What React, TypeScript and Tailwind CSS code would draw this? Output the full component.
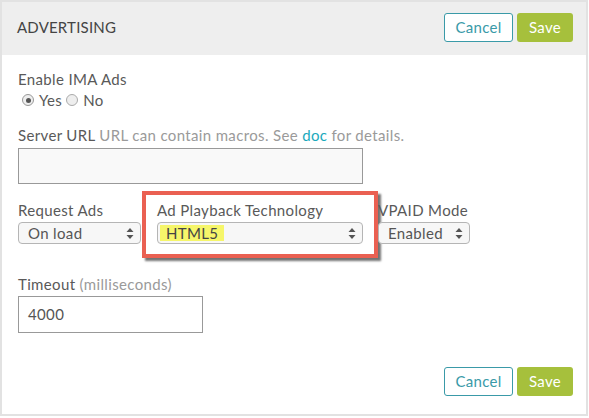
import React from "react";

const Arrows = () => (
  <svg width="8" height="13" viewBox="0 0 8 13" className="shrink-0">
    <path d="M4 1 L7.5 5 L0.5 5 Z" fill="#555" />
    <path d="M4 12 L7.5 8 L0.5 8 Z" fill="#555" />
  </svg>
);

const Select = ({ value, w, highlight }: { value: string; w: string; highlight?: boolean }) => (
  <div
    className={`${w} h-[22px] rounded-[4px] border border-[#b5b5b5] bg-[#f7f7f7] flex items-center justify-between ${
      highlight ? "pl-[2px]" : "pl-[9px]"
    } pr-[6px] text-[15px] text-[#555]`}
  >
    {highlight ? (
      <span className="bg-[#f6f66a] pl-[6px] pr-[6px] leading-[16px] text-[#444]">{value}</span>
    ) : (
      <span className="leading-[16px]">{value}</span>
    )}
    <Arrows />
  </div>
);

const Buttons = () => (
  <div className="flex gap-[4px]">
    <button className="w-[69px] h-[29px] rounded-[3px] border border-[#3a9aa8] bg-white text-[#3a9aa8] text-[15px] tracking-[0.3px]">
      Cancel
    </button>
    <button className="w-[56px] h-[29px] rounded-[3px] bg-[#a6c03c] text-white text-[15px] tracking-[0.3px]">
      Save
    </button>
  </div>
);

export default function App() {
  return (
    <div className="w-[589px] h-[418px] bg-white" style={{ fontFamily: "Lato, 'Open Sans', sans-serif" }}>
      <div className="w-[588px] h-[416px] border-2 border-[#e2e2e2] flex flex-col">
        <div className="h-[53px] bg-[#eeeeee] flex items-start justify-between pl-[15px] pr-[13px] pt-[11px]">
          <span className="text-[15px] text-[#444] tracking-[0.2px] leading-[29px]">ADVERTISING</span>
          <Buttons />
        </div>
        <div className="flex flex-col pl-[16px] pt-[15px] text-[15px] text-[#595959] tracking-[0.35px]">
          <div className="leading-[18px]">Enable IMA Ads</div>
          <div className="flex items-center mt-[3px] leading-[18px]">
            <span className="ml-[4px] w-[12px] h-[12px] rounded-full border border-[#999] bg-[#eee] flex items-center justify-center">
              <span className="w-[5px] h-[5px] rounded-full bg-[#555]" />
            </span>
            <span className="ml-[5px]">Yes</span>
            <span className="ml-[4px] w-[12px] h-[12px] rounded-full border border-[#aaa] bg-[#eee]" />
            <span className="ml-[5px]">No</span>
          </div>
          <div className="mt-[17px] leading-[18px]">
            Server URL{" "}
            <span className="text-[#9a9a9a]">
              URL can contain macros. See <span className="text-[#1aa9bc]">doc</span> for details.
            </span>
          </div>
          <div className="mt-[4px] w-[345px] h-[36px] border border-[#999] bg-[#f9f9f9]" />
          <div className="flex items-start mt-[7px]">
            <div className="flex flex-col pt-[10px]">
              <div className="leading-[18px]">Request Ads</div>
              <div className="mt-[3px]">
                <Select value="On load" w="w-[123px]" />
              </div>
            </div>
            <div className="ml-[1px] w-[236px] h-[67px] border-[4px] border-[#ea6052] shadow-[3px_3px_2px_rgba(0,0,0,0.55)] pl-[11px] pt-[6px] flex flex-col">
              <div className="leading-[18px]">Ad Playback Technology</div>
              <div className="mt-[3px]">
                <Select value="HTML5" w="w-[206px]" highlight />
              </div>
            </div>
            <div className="flex flex-col pt-[10px]">
              <div className="leading-[18px]">VPAID Mode</div>
              <div className="mt-[3px]">
                <Select value="Enabled" w="w-[92px]" />
              </div>
            </div>
          </div>
          <div className="mt-[17px] leading-[18px]">
            Timeout <span className="text-[#9a9a9a]">(milliseconds)</span>
          </div>
          <div className="mt-[3px] w-[185px] h-[37px] border border-[#999] bg-white flex items-center pl-[9px] text-[#555]">
            4000
          </div>
        </div>
        <div className="flex-1" />
        <div className="flex justify-end pr-[13px] pb-[18px]">
          <Buttons />
        </div>
      </div>
    </div>
  );
}
